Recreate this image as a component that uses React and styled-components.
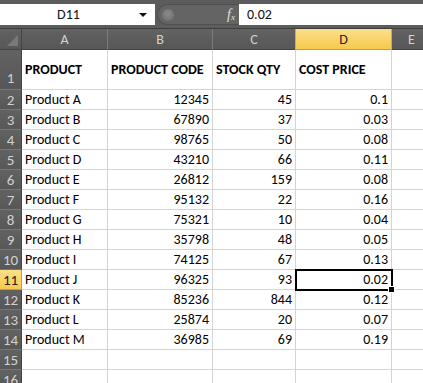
import React from 'react'
import styled, { createGlobalStyle, css } from 'styled-components'

const rows = [
    ['Product A', 12345, 45, '0.1'],
    ['Product B', 67890, 37, '0.03'],
    ['Product C', 98765, 50, '0.08'],
    ['Product D', 43210, 66, '0.11'],
    ['Product E', 26812, 159, '0.08'],
    ['Product F', 95132, 22, '0.16'],
    ['Product G', 75321, 10, '0.04'],
    ['Product H', 35798, 48, '0.05'],
    ['Product I', 74125, 67, '0.13'],
    ['Product J', 96325, 93, '0.02'],
    ['Product K', 85236, 844, '0.12'],
    ['Product L', 25874, 20, '0.07'],
    ['Product M', 36985, 69, '0.19'],
];

const columns = ['A', 'B', 'C', 'D', 'E'];

const App = () => {
  return (
    <>
    <GlobalStyle />
    <Window>
        <FormulaBar>
            <NameBox>
                <NameText>D11</NameText>
                <Arrow />
            </NameBox>
            <Pill>
                <Knob />
                <Fx>f<sub>x</sub></Fx>
            </Pill>
            <FormulaInput>0.02</FormulaInput>
        </FormulaBar>

        <Sheet>
            <Corner><CornerTriangle /></Corner>
            {columns.map((c) => (
                <ColHead key={c} active={c === 'D'}>{c}</ColHead>
            ))}

            <RowHead tall>1</RowHead>
            <Cell tall bold>PRODUCT</Cell>
            <Cell tall bold>PRODUCT CODE</Cell>
            <Cell tall bold>STOCK QTY</Cell>
            <Cell tall bold>COST PRICE</Cell>
            <Cell tall />

            {rows.map((r, i) => {
                const n = i + 2;
                return (
                    <React.Fragment key={n}>
                        <RowHead active={n === 11}>{n}</RowHead>
                        <Cell>{r[0]}</Cell>
                        <Cell num>{r[1]}</Cell>
                        <Cell num>{r[2]}</Cell>
                        <Cell num selected={n === 11}>
                            {r[3]}
                            {n === 11 && <Handle />}
                        </Cell>
                        <Cell />
                    </React.Fragment>
                )
            })}

            {[15, 16, 17].map((n) => (
                <React.Fragment key={n}>
                    <RowHead>{n}</RowHead>
                    <Cell /><Cell /><Cell /><Cell /><Cell />
                </React.Fragment>
            ))}
        </Sheet>
    </Window>
    </>
  )
}

const GlobalStyle = createGlobalStyle`
    body {
        margin: 0;
        background: #fff;
        font-family: Carlito, "Liberation Sans", Arial, sans-serif;
        overflow: hidden;
    }
`;

const Window = styled.div`
    width: 423px;
    height: 383px;
    overflow: hidden;
    background: #fff;
`;

const FormulaBar = styled.div`
    display: flex;
    align-items: stretch;
    height: 21px;
    padding: 4px 0 3px 0;
    background: #5c5c5c;
    border-bottom: 1px solid #3e3e3e;
`;

const NameBox = styled.div`
    width: 155px;
    background: #fff;
    display: flex;
    align-items: center;
    position: relative;
`;

const NameText = styled.div`
    flex: 1;
    text-align: center;
    font-size: 14px;
    color: #111;
    padding-right: 18px;
`;

const Arrow = styled.div`
    position: absolute;
    right: 8px;
    top: 9px;
    width: 0;
    height: 0;
    border-left: 4px solid transparent;
    border-right: 4px solid transparent;
    border-top: 4px solid #111;
`;

const Pill = styled.div`
    width: 82px;
    margin-left: 2px;
    background: #646464;
    border-radius: 11px 0 0 11px;
    border: 1px solid #505050;
    border-right: none;
    display: flex;
    align-items: center;
    justify-content: space-between;
    padding: 0 4px 0 4px;
    box-sizing: border-box;
`;

const Knob = styled.div`
    width: 12px;
    height: 12px;
    border-radius: 50%;
    background: radial-gradient(circle at 50% 40%, #8a8a8a, #6a6a6a);
`;

const Fx = styled.div`
    font-family: "Liberation Serif", serif;
    font-style: italic;
    font-size: 14px;
    color: #e0e0e0;
    line-height: 1;

    sub {
        font-size: 9px;
        vertical-align: -1px;
    }
`;

const FormulaInput = styled.div`
    flex: 1;
    background: #fff;
    font-size: 14px;
    color: #111;
    display: flex;
    align-items: center;
    padding-left: 8px;
`;

const Sheet = styled.div`
    display: grid;
    grid-template-columns: 22px 86px 105px 83px 96px 40px;
    grid-auto-rows: 20px;
    grid-template-rows: 21px 40px;
`;

const headBase = css`
    background: linear-gradient(#626262, #575757);
    color: #d2d2d2;
    font-size: 14px;
    box-sizing: border-box;
    display: flex;
`;

const Corner = styled.div`
    ${headBase};
    position: relative;
    border-right: 1px solid #444;
    border-bottom: 1px solid #444;
`;

const CornerTriangle = styled.div`
    position: absolute;
    right: 3px;
    bottom: 3px;
    width: 0;
    height: 0;
    border-left: 11px solid transparent;
    border-bottom: 11px solid #7a7a7a;
`;

const ColHead = styled.div`
    ${headBase};
    align-items: center;
    justify-content: center;
    border-right: 1px solid #7b7b7b;
    border-bottom: 1px solid #444;

    ${(p) => p.active && css`
        background: linear-gradient(#fbe08a, #f6c94c);
        color: #222;
        border-right: 1px solid #e1a63a;
        border-left: 1px solid #e1a63a;
        margin-left: -1px;
        border-bottom: 1px solid #d89a2c;
    `}
`;

const RowHead = styled.div`
    ${headBase};
    align-items: ${(p) => (p.tall ? 'flex-end' : 'center')};
    justify-content: center;
    padding-bottom: ${(p) => (p.tall ? '2px' : '0')};
    border-right: 1px solid #444;
    border-bottom: 1px solid #777;
    font-size: 15px;

    ${(p) => p.active && css`
        background: linear-gradient(#fbe08a, #f6c94c);
        color: #222;
        border-bottom: 1px solid #d89a2c;
        border-right: 1px solid #d89a2c;
    `}
`;

const Cell = styled.div`
    position: relative;
    box-sizing: border-box;
    border-right: 1px solid #d4d4d4;
    border-bottom: 1px solid #d4d4d4;
    font-size: 14px;
    color: #000;
    display: flex;
    align-items: center;
    white-space: nowrap;
    overflow: visible;
    padding: 0 3px;
    justify-content: ${(p) => (p.num ? 'flex-end' : 'flex-start')};
    font-weight: ${(p) => (p.bold ? 700 : 400)};

    ${(p) => p.selected && css`
        outline: 2px solid #000;
        outline-offset: -1px;
        z-index: 1;
    `}
`;

const Handle = styled.div`
    position: absolute;
    right: -4px;
    bottom: -4px;
    width: 5px;
    height: 5px;
    background: #000;
    border: 1px solid #fff;
`;

export default App
